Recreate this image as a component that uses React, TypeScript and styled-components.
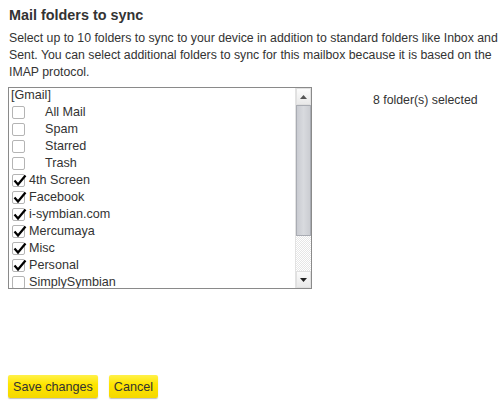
import React from "react"
import styled, { createGlobalStyle } from "styled-components"

const GlobalStyle = createGlobalStyle`
  body {
    margin: 0;
    background: #ffffff;
    font-family: "Liberation Sans", Arial, sans-serif;
    color: #333333;
  }
`

interface Folder {
  name: string
  checked?: boolean
  indent?: boolean
  header?: boolean
}

const folders: Folder[] = [
  { name: "[Gmail]", header: true },
  { name: "All Mail", indent: true },
  { name: "Spam", indent: true },
  { name: "Starred", indent: true },
  { name: "Trash", indent: true },
  { name: "4th Screen", checked: true },
  { name: "Facebook", checked: true },
  { name: "i-symbian.com", checked: true },
  { name: "Mercumaya", checked: true },
  { name: "Misc", checked: true },
  { name: "Personal", checked: true },
  { name: "SimplySymbian" },
]

const App = () => {
  const selected = folders.filter(f => f.checked).length + 2
  return (
    <Page>
      <GlobalStyle />
      <Title>Mail folders to sync</Title>
      <Description>
        Select up to 10 folders to sync to your device in addition to standard folders like Inbox and
        <br />
        Sent. You can select additional folders to sync for this mailbox because it is based on the
        <br />
        IMAP protocol.
      </Description>
      <PickerRow>
        <ListBox>
          <List>
            {folders.map(f =>
              f.header ? (
                <HeaderRow key={f.name}>{f.name}</HeaderRow>
              ) : (
                <Row key={f.name} indent={f.indent}>
                  <Box>
                    {f.checked && (
                      <svg width="14" height="13" viewBox="0 0 14 13">
                        <path d="M1.5 6.5 L5 10.5 L12.5 1.5" fill="none" stroke="#000" strokeWidth="2.2" />
                      </svg>
                    )}
                  </Box>
                  <Label>{f.name}</Label>
                </Row>
              )
            )}
          </List>
          <ScrollBar>
            <ArrowButton>
              <svg width="7" height="4" viewBox="0 0 7 4">
                <path d="M0 4 L3.5 0 L7 4 Z" fill="#555" />
              </svg>
            </ArrowButton>
            <Thumb>
              <Grip />
            </Thumb>
            <Track />
            <ArrowButton>
              <svg width="7" height="4" viewBox="0 0 7 4">
                <path d="M0 0 L7 0 L3.5 4 Z" fill="#222" />
              </svg>
            </ArrowButton>
          </ScrollBar>
        </ListBox>
        <Count>{selected} folder(s) selected</Count>
      </PickerRow>
      <Actions>
        <Button>Save changes</Button>
        <Button>Cancel</Button>
      </Actions>
    </Page>
  )
}

const Page = styled.div`
  width: 501px;
  height: 407px;
  padding: 5px 8px 0 8px;
  box-sizing: border-box;
  display: flex;
  flex-direction: column;
`
const Title = styled.h2`
  margin: 0 0 0 1px;
  font-size: 14.4px;
  line-height: 20px;
  font-weight: bold;
  color: #333333;
`
const Description = styled.p`
  margin: 5px -4px 0 1px;
  font-size: 12.3px;
  line-height: 17px;
  white-space: nowrap;
  color: #333333;
`
const PickerRow = styled.div`
  display: flex;
  align-items: flex-start;
  margin-top: 6px;
`
const ListBox = styled.div`
  width: 304px;
  height: 202px;
  box-sizing: border-box;
  border: 1px solid #8a8a8a;
  display: flex;
  overflow: hidden;
`
const List = styled.div`
  flex: 1;
  display: flex;
  flex-direction: column;
  margin-top: -1px;
`
const HeaderRow = styled.div`
  height: 17px;
  line-height: 17px;
  font-size: 12.6px;
  padding-left: 2px;
  color: #333;
`
const Row = styled.div<{ indent?: boolean }>`
  height: 17px;
  flex-shrink: 0;
  display: flex;
  align-items: center;
  padding-left: 3px;
  gap: ${p => (p.indent ? "20px" : "4px")};
`
const Box = styled.span`
  width: 13px;
  height: 13px;
  box-sizing: border-box;
  border: 1px solid #b4b4b4;
  border-radius: 2px;
  background: #ffffff;
  position: relative;
  flex-shrink: 0;
  svg {
    position: absolute;
    left: 0;
    top: -1px;
  }
`
const Label = styled.span`
  font-size: 12.6px;
  line-height: 17px;
  color: #333;
`
const ScrollBar = styled.div`
  width: 15px;
  display: flex;
  flex-direction: column;
  border-left: 1px solid #e2e2e2;
  background: #f4f4f4;
`
const ArrowButton = styled.div`
  height: 17px;
  flex-shrink: 0;
  display: flex;
  align-items: center;
  justify-content: center;
  background: linear-gradient(#fbfbfb, #e9e9e9);
  border: 1px solid #e0e0e0;
  box-sizing: border-box;
`
const Thumb = styled.div`
  height: 131px;
  flex-shrink: 0;
  box-sizing: border-box;
  border: 1px solid #a9acb3;
  background: linear-gradient(to right, #c9cbd1, #d8dade 50%, #cbcdd2);
  display: flex;
  align-items: center;
  justify-content: center;
`
const Grip = styled.div`
  width: 7px;
  height: 7px;
  background-image: radial-gradient(#8f9197 40%, transparent 45%);
  background-size: 2px 2px;
`
const Track = styled.div`
  flex: 1;
  background-color: #ffffff;
  background-image: linear-gradient(45deg, #e6e6e6 25%, transparent 25%, transparent 75%, #e6e6e6 75%),
    linear-gradient(45deg, #e6e6e6 25%, transparent 25%, transparent 75%, #e6e6e6 75%);
  background-size: 2px 2px;
  background-position: 0 0, 1px 1px;
`
const Count = styled.div`
  margin: 6px 0 0 61px;
  font-size: 12.3px;
  line-height: 14px;
  color: #333;
`
const Actions = styled.div`
  display: flex;
  gap: 11px;
  margin-top: auto;
  margin-bottom: 9px;
`
const Button = styled.button`
  height: 23px;
  padding: 0 5px;
  font-family: "Liberation Sans", Arial, sans-serif;
  font-size: 12.6px;
  color: #333;
  border: none;
  border-radius: 2px;
  background: linear-gradient(#fff14a, #ffe500 40%, #f4d800);
  box-shadow: 0 1px 1px rgba(0, 0, 0, 0.25);
  cursor: pointer;
`

export default App
